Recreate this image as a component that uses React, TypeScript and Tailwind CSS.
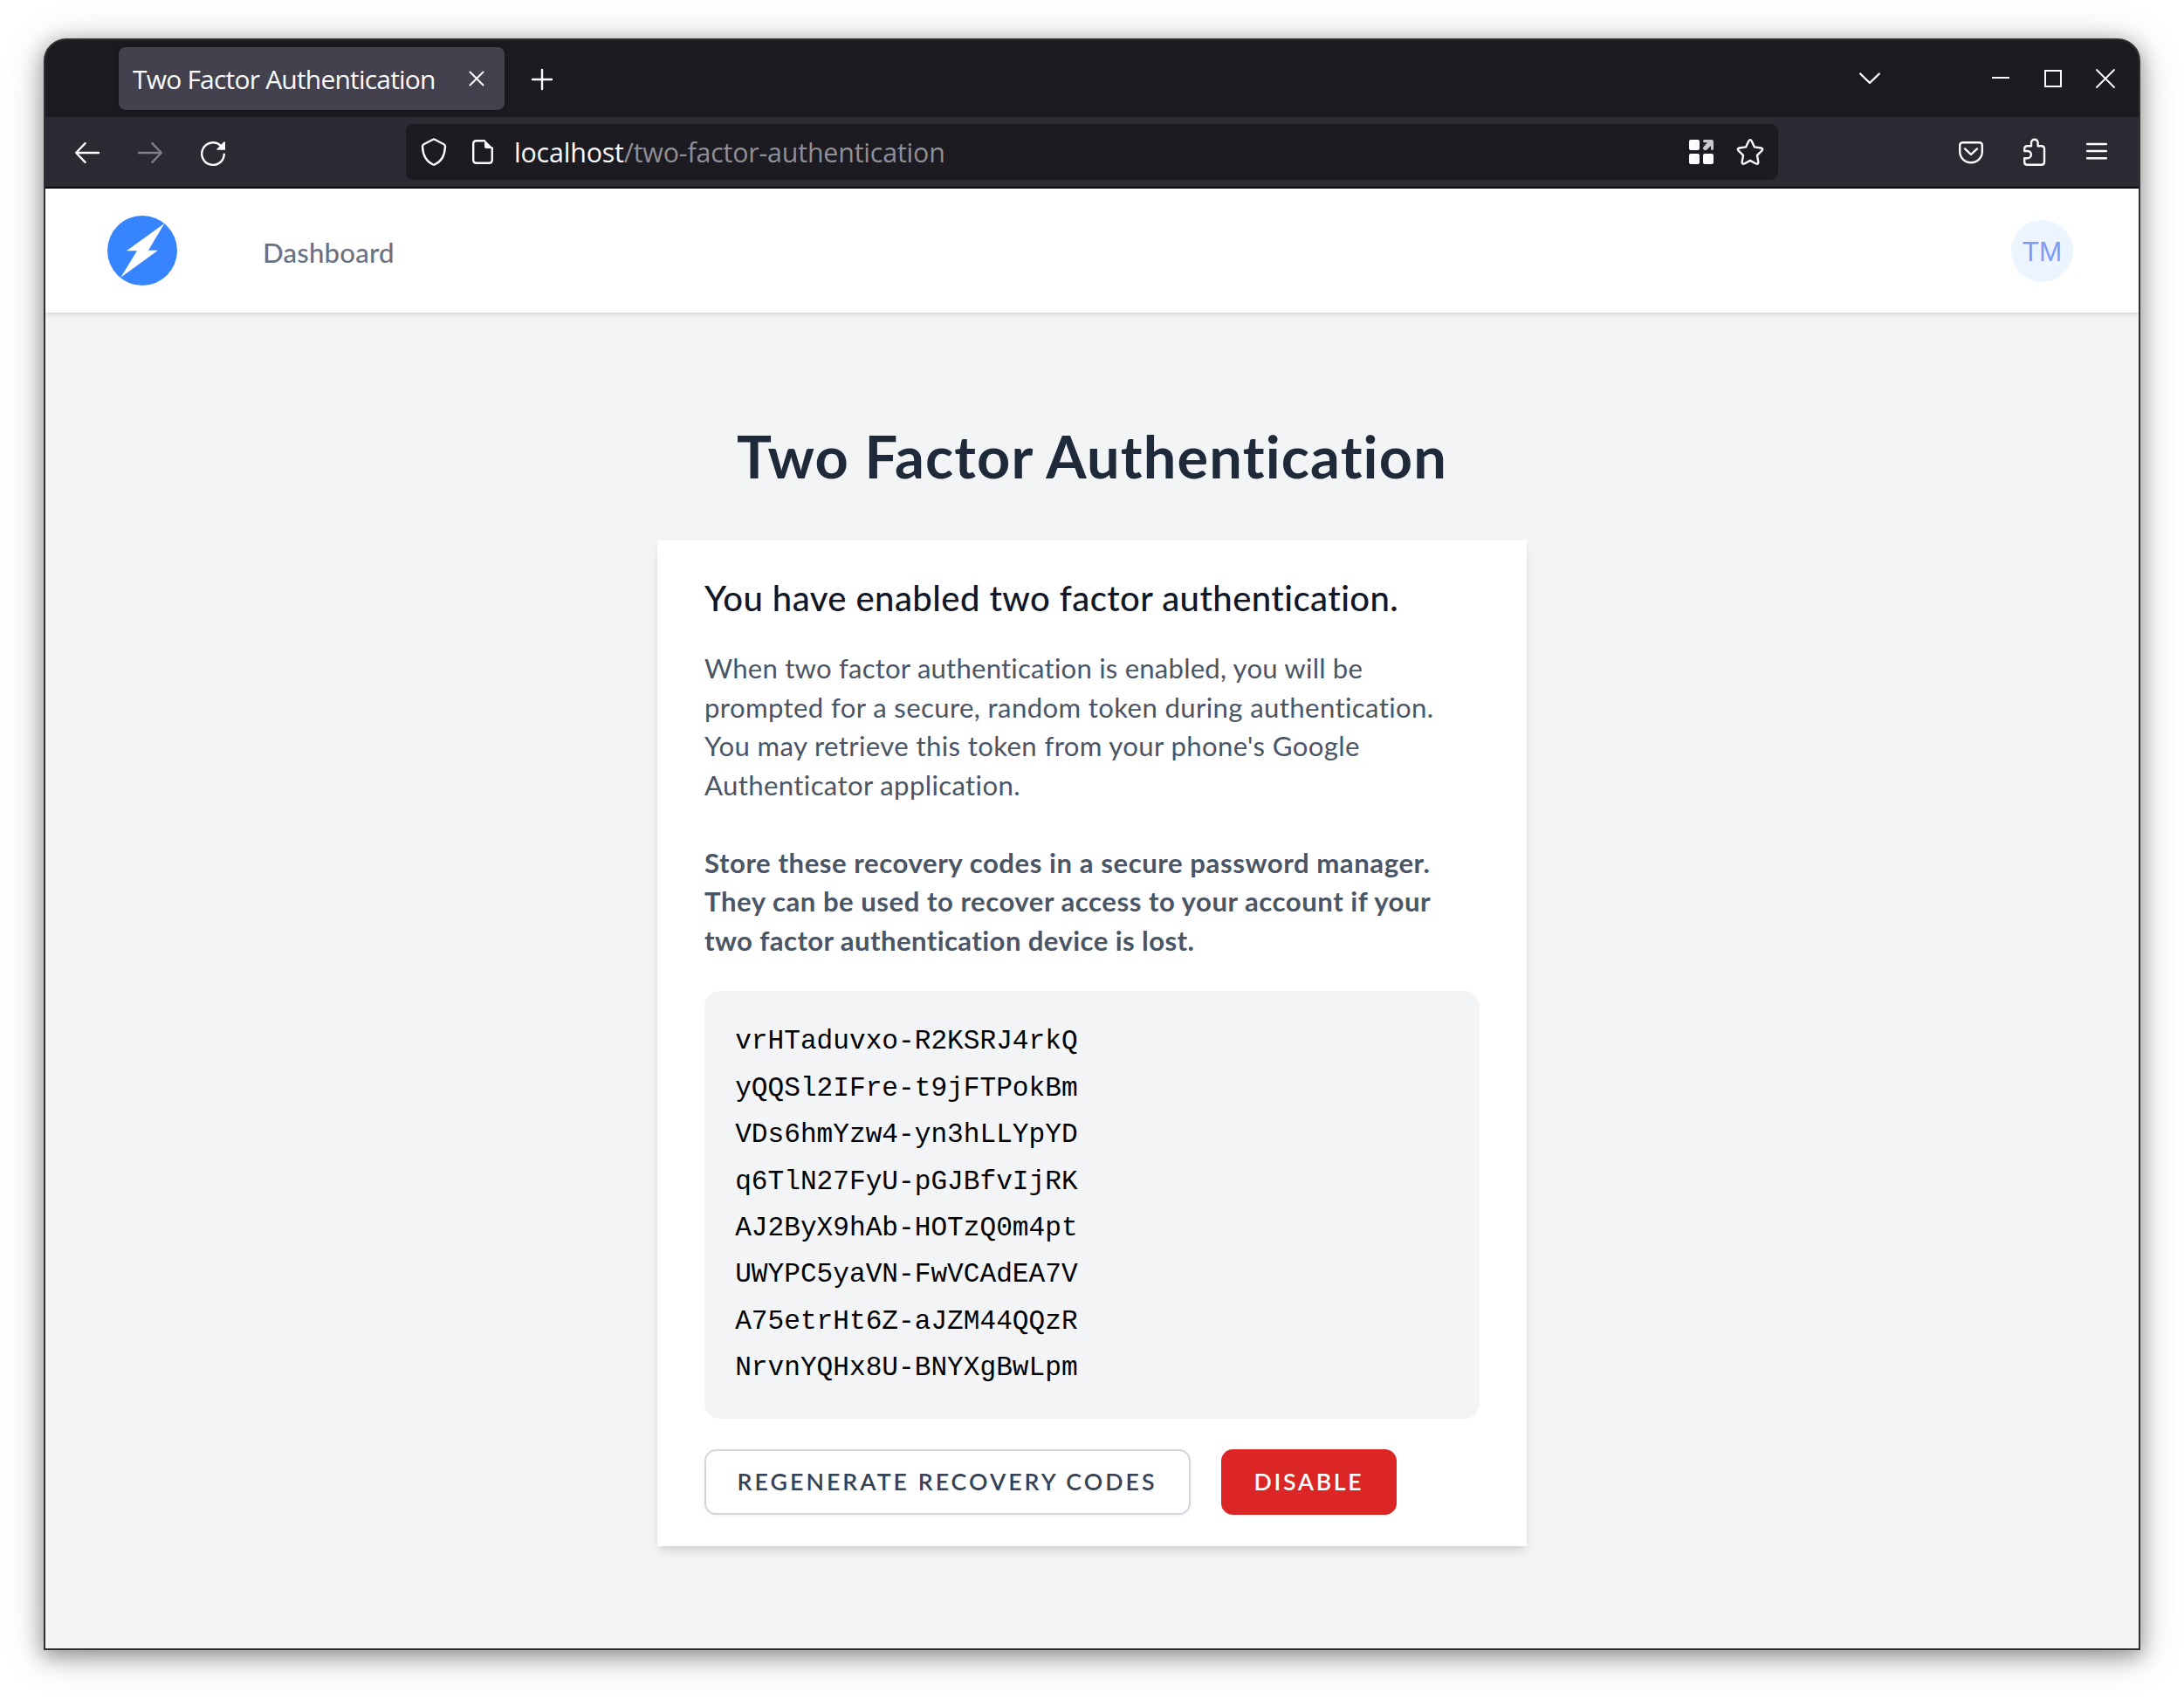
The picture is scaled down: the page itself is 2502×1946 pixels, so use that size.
import type { ReactNode } from "react";

const codes = [
  "vrHTaduvxo-R2KSRJ4rkQ",
  "yQQSl2IFre-t9jFTPokBm",
  "VDs6hmYzw4-yn3hLLYpYD",
  "q6TlN27FyU-pGJBfvIjRK",
  "AJ2ByX9hAb-HOTzQ0m4pt",
  "UWYPC5yaVN-FwVCAdEA7V",
  "A75etrHt6Z-aJZM44QQzR",
  "NrvnYQHx8U-BNYXgBwLpm",
];

function Icon({ className = "", children }: { className?: string; children: ReactNode }) {
  return (
    <svg
      viewBox="0 0 32 32"
      className={`size-8 shrink-0 ${className}`}
      fill="none"
      stroke="currentColor"
      strokeWidth="2.4"
      strokeLinecap="round"
      strokeLinejoin="round"
    >
      {children}
    </svg>
  );
}

function TabBar() {
  return (
    <div className="flex h-[88px] items-start bg-[#1c1b22] pt-2 pl-[84px] text-[#fbfbfe]">
      <div className="flex h-[72px] w-[442px] items-center rounded-lg bg-[#42414d] pl-4 shadow-[0_0_8px_rgba(0,0,0,0.4)]">
        <span className="w-[360px] whitespace-nowrap text-[30px] tracking-[-0.8px]">Two Factor Authentication</span>
        <Icon className="ml-[18px]">
          <path strokeWidth="2" d="M8.5 8.5l15 15M23.5 8.5l-15 15" />
        </Icon>
      </div>
      <Icon className="mt-[21px] ml-[27px]">
        <path d="M16 5v22M5 16h22" />
      </Icon>
      <Icon className="mt-5 ml-auto">
        <path d="M5.2 10.5L16 21 26.8 10.5" />
      </Icon>
      <Icon className="mt-5 ml-[118px]">
        <path strokeLinecap="butt" strokeWidth="2" d="M6 15h20" />
      </Icon>
      <Icon className="mt-5 ml-7">
        <rect x="7" y="7" width="18" height="18" strokeWidth="2" strokeLinejoin="miter" />
      </Icon>
      <Icon className="mt-5 mr-[22px] ml-7">
        <path strokeWidth="1.9" d="M6 6l20 20M26 6L6 26" />
      </Icon>
    </div>
  );
}

function Toolbar() {
  return (
    <div className="flex h-[82px] items-start border-b-2 border-[#0c0c0d] bg-[#2b2a33] pt-2 pl-8 text-[#fbfbfe]">
      <Icon className="mt-4">
        <path d="M29 17H3.4M13.6 6.2L3.2 17l10.4 10.8" />
      </Icon>
      <Icon className="mt-4 ml-10 text-[#817f88]">
        <path d="M3 17h25.6M18.4 6.2L28.8 17 18.4 27.8" />
      </Icon>
      <Icon className="mt-4 ml-10">
        <path d="M28.8 18.6A12.8 12.8 0 1 1 24.8 8.8" />
        <path d="M30 4.6v9.2h-9.4l-.5-.9 8.6-8.7z" fill="currentColor" stroke="none" />
      </Icon>
      <div className="ml-[205px] flex h-16 w-[1572px] items-center rounded-lg bg-[#1c1b22] px-4">
        <Icon>
          <path d="M15.1 1.8q.9-.5 1.8 0l10.6 5.4q1.6.9 1.5 2.6C28.6 19 24.5 27.2 16.9 30.5q-.9.4-1.8 0C7.5 27.2 3.4 19 3 9.8q-.1-1.7 1.5-2.6z" />
        </Icon>
        <Icon className="ml-6">
          <path d="M18 3.2H8.800q-3.600 0-3.600 3.600v18.400q0 3.600 3.600 3.600h14.400q3.600 0 3.600-3.600V11.500" />
          <path d="M18 2l10 10h-8q-2 0-2-2z" fill="currentColor" stroke="none" />
        </Icon>
        <span className="ml-[20px] pt-0.5 whitespace-nowrap text-[30.4px] tracking-[-0.18px]">
          localhost<span className="text-[#8f8f96]">/two-factor-authentication</span>
        </span>
        <Icon className="ml-auto">
          <g fill="currentColor" stroke="none">
            <rect x="2" y="2" width="12" height="12" rx="2" />
            <rect x="2" y="18" width="12" height="12" rx="2" />
            <rect x="18" y="18" width="12" height="12" rx="2" />
            <path
              fill="#c9c9cb"
              d="M19.5 2H28q2 0 2 2v8.500q0 1.500-1.500 1.500t-1.500-1.500V9l-4.600 4.600q-1.200 1-2.900.4l-1.200-1q-.8-1.400.2-2.800L23 5.200h-3.500Q18 5.200 18 3.600T19.500 2z"
            />
          </g>
        </Icon>
        <Icon className="ml-6">
          <path d="M14.300 3.600q1.700-3 3.400 0l3.200 6.800 7.500 1.100q3 .7 1 3.100l-5.400 5.300 1.300 7.600q.2 3.100-2.600 2L16 25.900l-6.700 3.600q-2.800 1.100-2.600-2L8 19.900l-5.400-5.300q-2-2.400 1-3.100l7.500-1.100z" />
        </Icon>
      </div>
      <Icon className="mt-4 ml-[205px]">
        <path d="M6.600 5.200h18.800q3.400 0 3.400 3.400v7.200a12.800 12.400 0 0 1-25.600 0V8.600q0-3.400 3.400-3.400z" />
        <path d="M9 12.400l7 6.600 7-6.600" />
      </Icon>
      <Icon className="mt-4 ml-10">
        <path d="M5.200 15V12.500q0-3.300 3.300-3.300H13V5.500a3.800 3.800 0 0 1 7.600 0V9.200h4.200q3.200 0 3.200 3.300v15q0 3.300-3.200 3.300H8.500q-3.300 0-3.300-3.300V23.200h3.600a4.100 4.100 0 0 0 0-8.200z" />
      </Icon>
      <Icon className="mt-4 ml-10">
        <path d="M5.100 7h21.800M5.100 15h21.800M5.100 23.200h21.800" />
      </Icon>
    </div>
  );
}

function SiteHeader() {
  return (
    <header className="relative flex h-[142px] items-center bg-white pr-[75px] pl-[71px] shadow-[0_2px_6px_rgba(0,0,0,0.1),0_2px_4px_-2px_rgba(0,0,0,0.1)]">
      <svg viewBox="0 0 80 80" className="size-20">
        <circle cx="40" cy="40" r="40" fill="#3784ff" />
        <path d="M65.300 9L47 39.700h11L15.300 70.800 34 40.300H22z" fill="#fff" />
      </svg>
      <a className="ml-[98px] pt-[5px] text-[31.15px] leading-[44.5px] font-medium tracking-[0.2px] text-gray-500">Dashboard</a>
      <div className="ml-auto flex size-[71px] items-center justify-center rounded-full bg-[#ebf4ff] pt-1 font-['Liberation_Sans',sans-serif] text-[31.5px] leading-none text-[#7f9cf5]">
        TM
      </div>
    </header>
  );
}

function Card() {
  return (
    <section className="w-[996px] bg-white px-[54px] pt-[35px] pb-[35.6px] shadow-[0_8px_12px_-2px_rgba(0,0,0,0.1),0_4px_8px_-4px_rgba(0,0,0,0.1)]">
      <h3 className="text-[40.05px] leading-[62.3px] font-medium tracking-[0.43px] whitespace-nowrap text-gray-900">
        You have enabled two factor authentication.
      </h3>
      <p className="mt-[26.7px] text-[31.15px] leading-[44.5px] whitespace-nowrap text-gray-600">
        <span className="block tracking-[0.19px]">When two factor authentication is enabled, you will be</span>
        <span className="block tracking-[0.37px]">prompted for a secure, random token during authentication.</span>
        <span className="block tracking-[0.37px]">You may retrieve this token from your phone's Google</span>
        <span className="block tracking-[0.35px]">Authenticator application.</span>
      </p>
      <p className="mt-[44.5px] text-[31.15px] leading-[44.5px] font-bold whitespace-nowrap text-gray-600">
        <span className="block tracking-[0.55px]">Store these recovery codes in a secure password manager.</span>
        <span className="block tracking-[0.51px]">They can be used to recover access to your account if your</span>
        <span className="block tracking-[0.39px]">two factor authentication device is lost.</span>
      </p>
      <div className="mt-[36px] grid gap-[8.9px] rounded-[17.8px] bg-gray-100 px-[35.2px] pt-[36.3px] pb-[34.9px] font-['Liberation_Mono',monospace] text-[31.15px] leading-[44.5px] text-black">
        {codes.map((code) => (
          <div key={code}>{code}</div>
        ))}
      </div>
      <div className="mt-[35.6px] flex gap-[35px] text-[26.7px] leading-[35.6px] font-semibold uppercase">
        <button className="w-[557px] rounded-[13.35px] border-2 border-gray-300 bg-white py-[17.8px] pl-[35.6px] text-left tracking-[3.02px] whitespace-nowrap text-gray-700 shadow-[0_2px_4px_rgba(0,0,0,0.05)]">
          REGENERATE RECOVERY CODES
        </button>
        <button className="w-[201px] rounded-[13.35px] border-2 border-transparent bg-[#dc2626] py-[17.8px] pl-[35.6px] text-left tracking-[2.67px] text-white">
          DISABLE
        </button>
      </div>
    </section>
  );
}

export default function App() {
  return (
    <div className="h-[1946px] w-[2502px] overflow-hidden bg-white px-[50px] pt-11 font-['Open_Sans',sans-serif]">
      <div className="h-[1846px] rounded-t-[26px] border-2 border-[#2f2f2f] bg-[#2f2f2f] shadow-[0_6px_22px_2px_rgba(0,0,0,0.32),0_6px_50px_rgba(0,0,0,0.2)]">
        <div className="flex h-full flex-col overflow-hidden rounded-t-[24px]">
          <TabBar />
          <Toolbar />
          <div className="flex-1 bg-gray-100 font-['Lato',sans-serif]">
            <SiteHeader />
            <main className="flex flex-col items-center pt-[124px]">
              <h1 className="mb-[57px] text-[66.75px] leading-[80.1px] font-bold tracking-[1.15px] text-gray-800">
                Two Factor Authentication
              </h1>
              <Card />
            </main>
          </div>
        </div>
      </div>
    </div>
  );
}
